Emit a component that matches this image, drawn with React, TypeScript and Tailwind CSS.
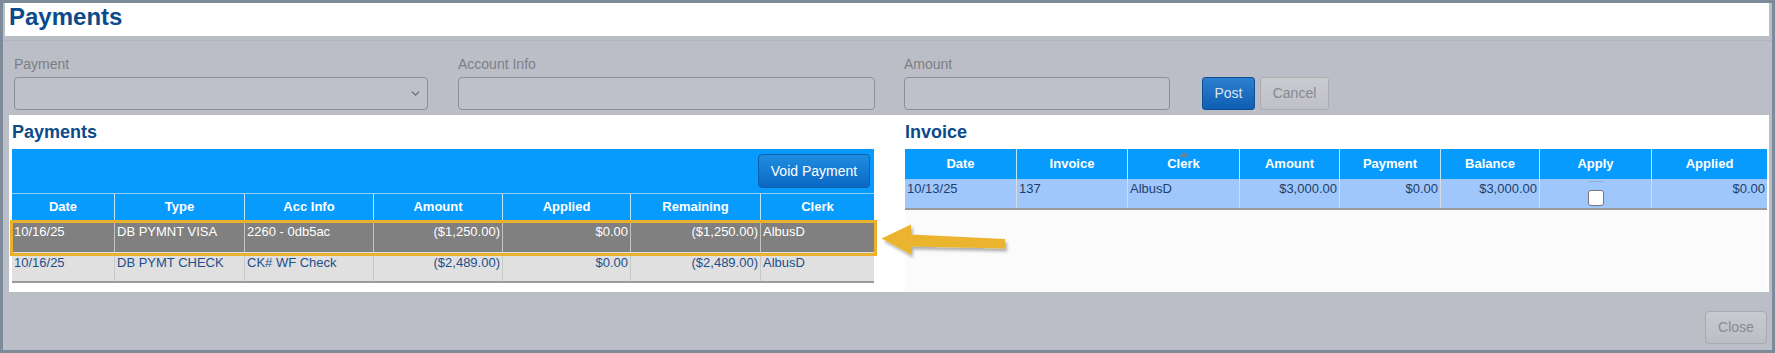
import { ChevronDown } from "lucide-react";

const payHead = ["Date", "Type", "Acc Info", "Amount", "Applied", "Remaining", "Clerk"];
const payRows = [
  {
    sel: true,
    cells: ["10/16/25", "DB PYMNT VISA", "2260 - 0db5ac", "($1,250.00)", "$0.00", "($1,250.00)", "AlbusD"],
  },
  {
    sel: false,
    cells: ["10/16/25", "DB PYMT CHECK", "CK# WF Check", "($2,489.00)", "$0.00", "($2,489.00)", "AlbusD"],
  },
];
const payRight = [3, 4, 5];

const invHead = ["Date", "Invoice", "Clerk", "Amount", "Payment", "Balance", "Apply", "Applied"];
const invRow = ["10/13/25", "137", "AlbusD", "$3,000.00", "$0.00", "$3,000.00", "", "$0.00"];
const invRight = [3, 4, 5, 7];

export default function App() {
  return (
    <div className="relative w-[1775px] h-[353px] overflow-hidden border-[3px] border-[#7d8a99] bg-[#bbbec6] font-['Liberation_Sans',Arial,sans-serif] flex flex-col">
      {/* titre */}
      <div className="ml-[2px] mr-[3px] h-[33px] shrink-0 bg-white pl-[4px] pt-[2px]">
        <h1 className="text-[24px] font-bold leading-[24px] text-[#0b4a8b]">Payments</h1>
      </div>
      <div className="h-[5px] shrink-0 border-b border-[#b2b5bd]" />

      {/* form row */}
      <div className="flex items-end pl-[11px] pt-[15px] pb-[5px] shrink-0">
        <div className="w-[414px]">
          <div className="h-[16px] mb-[5px] text-[14px] leading-[16px] text-[#7b7e85]">Payment</div>
          <div className="h-[33px] rounded-[4px] border border-[#8c8f97] bg-[#bec1c9] flex items-center justify-end pr-[5px]">
            <ChevronDown size={13} strokeWidth={2.5} className="text-[#6c6f76]" />
          </div>
        </div>
        <div className="w-[417px] ml-[30px]">
          <div className="h-[16px] mb-[5px] text-[14px] leading-[16px] text-[#7b7e85]">Account Info</div>
          <div className="h-[33px] rounded-[4px] border border-[#8c8f97] bg-[#bec1c9]" />
        </div>
        <div className="w-[266px] ml-[29px]">
          <div className="h-[16px] mb-[5px] text-[14px] leading-[16px] text-[#7b7e85]">Amount</div>
          <div className="h-[33px] rounded-[4px] border border-[#8c8f97] bg-[#bec1c9]" />
        </div>
        <button className="ml-[32px] w-[53px] h-[33px] rounded-[3px] border border-[#0c4f96] bg-gradient-to-b from-[#2c80cf] to-[#0e5eb2] text-[14px] text-[#dbe4f0]">
          Post
        </button>
        <button className="ml-[5px] w-[69px] h-[33px] rounded-[3px] border border-[#abadb2] bg-gradient-to-b from-[#c9cbd0] to-[#bfc1c6] text-[14px] text-[#86898f]">
          Cancel
        </button>
      </div>

      {/* panel */}
      <div className="ml-[6px] mr-[3px] h-[177px] shrink-0 bg-white flex">
        {/* left - payments */}
        <div className="pl-[3px] pt-[6px] w-[865px]">
          <h2 className="h-[22px] mb-[6px] text-[18px] leading-[22px] font-bold text-[#0b4a8b]">Payments</h2>
          <div className="relative w-[862px]">
            <div className="h-[44px] bg-[#069bfd] flex justify-end items-start pt-[5px] pr-[4px]">
              <button className="w-[112px] h-[34px] rounded-[4px] border border-[#0a5dad] bg-gradient-to-b from-[#1f8de2] to-[#0b68c4] text-[14px] text-white">
                Void Payment
              </button>
            </div>
            <div className="grid grid-cols-[103px_130px_129px_129px_128px_130px_113px] h-[27px] bg-[#069bfd] border-t border-[#8fd0ff]">
              {payHead.map((h, i) => (
                <div
                  key={h}
                  className={
                    "flex items-center justify-center text-[13px] font-bold text-white " +
                    (i < payHead.length - 1 ? "border-r border-[#bfe4ff]" : "")
                  }
                >
                  {h}
                </div>
              ))}
            </div>
            {payRows.map((r, ri) => (
              <div
                key={ri}
                className={
                  "grid grid-cols-[103px_130px_129px_129px_128px_130px_113px] " +
                  (r.sel ? "h-[32px] bg-[#808080] text-white" : "h-[29px] bg-[#e0e0e0] text-[#1d4f8c]")
                }
              >
                {r.cells.map((c, i) => (
                  <div
                    key={i}
                    className={
                      "px-[2px] text-[13px] leading-[16px] whitespace-nowrap " +
                      (r.sel ? "pt-[4px] " : "pt-[3px] ") +
                      (payRight.includes(i) ? "text-right " : "") +
                      (i < r.cells.length - 1 ? (r.sel ? "border-r border-[#c4c4c4]" : "border-r border-[#c8c8c8]") : "")
                    }
                  >
                    {c}
                  </div>
                ))}
              </div>
            ))}
            <div className="h-[2px] bg-[#9b9b9b]" />
            {/* selected row highlight */}
            <div className="absolute left-[-2px] top-[71px] w-[867px] h-[36px] border-[3px] border-[#e9b12c]" />
          </div>
        </div>

        {/* right - invoice */}
        <div className="ml-[31px] w-[862px] pt-[6px] flex flex-col">
          <h2 className="h-[22px] mb-[6px] text-[18px] leading-[22px] font-bold text-[#0b4a8b]">Invoice</h2>
          <div className="flex-1 bg-[#fbfbfb]">
            <div className="grid grid-cols-[112px_111px_112px_100px_101px_99px_112px_115px] h-[30px] bg-[#069bfd]">
              {invHead.map((h, i) => (
                <div
                  key={h + i}
                  className={
                    "relative flex items-center justify-center text-[13px] font-bold text-white " +
                    (i < invHead.length - 1 ? "border-r border-[#bfe4ff]" : "")
                  }
                >
                  {h === "Clerk" && (
                    <span className="absolute top-[3px] left-1/2 -translate-x-1/2 w-0 h-0 border-l-[5px] border-r-[5px] border-b-[5px] border-l-transparent border-r-transparent border-b-[#6f8193]" />
                  )}
                  {h}
                </div>
              ))}
            </div>
            <div className="grid grid-cols-[112px_111px_112px_100px_101px_99px_112px_115px] h-[29px] bg-[#9fc7fb] text-[#1e3e6c]">
              {invRow.map((c, i) =>
                i === 6 ? (
                  <div key={i} className="flex flex-col items-center border-r border-[#d6dde6]">
                    <div className="mt-[2px] w-[16px] h-px bg-[#8fb1dd]" />
                    <div className="mt-[8px] w-[16px] h-[16px] rounded-[3px] border border-[#767676] bg-white" />
                  </div>
                ) : (
                  <div
                    key={i}
                    className={
                      "pt-[2px] px-[2px] text-[13px] leading-[16px] whitespace-nowrap " +
                      (invRight.includes(i) ? "text-right " : "") +
                      (i < invRow.length - 1 ? "border-r border-[#d6dde6]" : "")
                    }
                  >
                    {c}
                  </div>
                )
              )}
            </div>
            <div className="h-[2px] bg-[#9b9b9b]" />
          </div>
        </div>
      </div>

      {/* footer */}
      <div className="flex-1 flex justify-end items-start pt-[19px] pr-[5px]">
        <button className="w-[62px] h-[33px] rounded-[4px] border border-[#a7aab0] bg-gradient-to-b from-[#c8cacf] to-[#bcbec3] text-[14px] text-[#888b91]">
          Close
        </button>
      </div>

      {/* callout arrow */}
      <svg
        className="absolute left-[867px] top-[212px] w-[145px] h-[50px]"
        viewBox="870 215 145 50"
      >
        <defs>
          <filter id="sh" x="-20%" y="-40%" width="140%" height="180%">
            <feDropShadow dx="2" dy="3" stdDeviation="1.8" floodColor="#000" floodOpacity="0.3" />
          </filter>
        </defs>
        <polygon
          points="881.5,238.5 911,224.5 911,234.5 1005,239 1005,248.5 911,246.5 911,254.5"
          fill="#ebb42d"
          filter="url(#sh)"
        />
      </svg>
    </div>
  );
}
